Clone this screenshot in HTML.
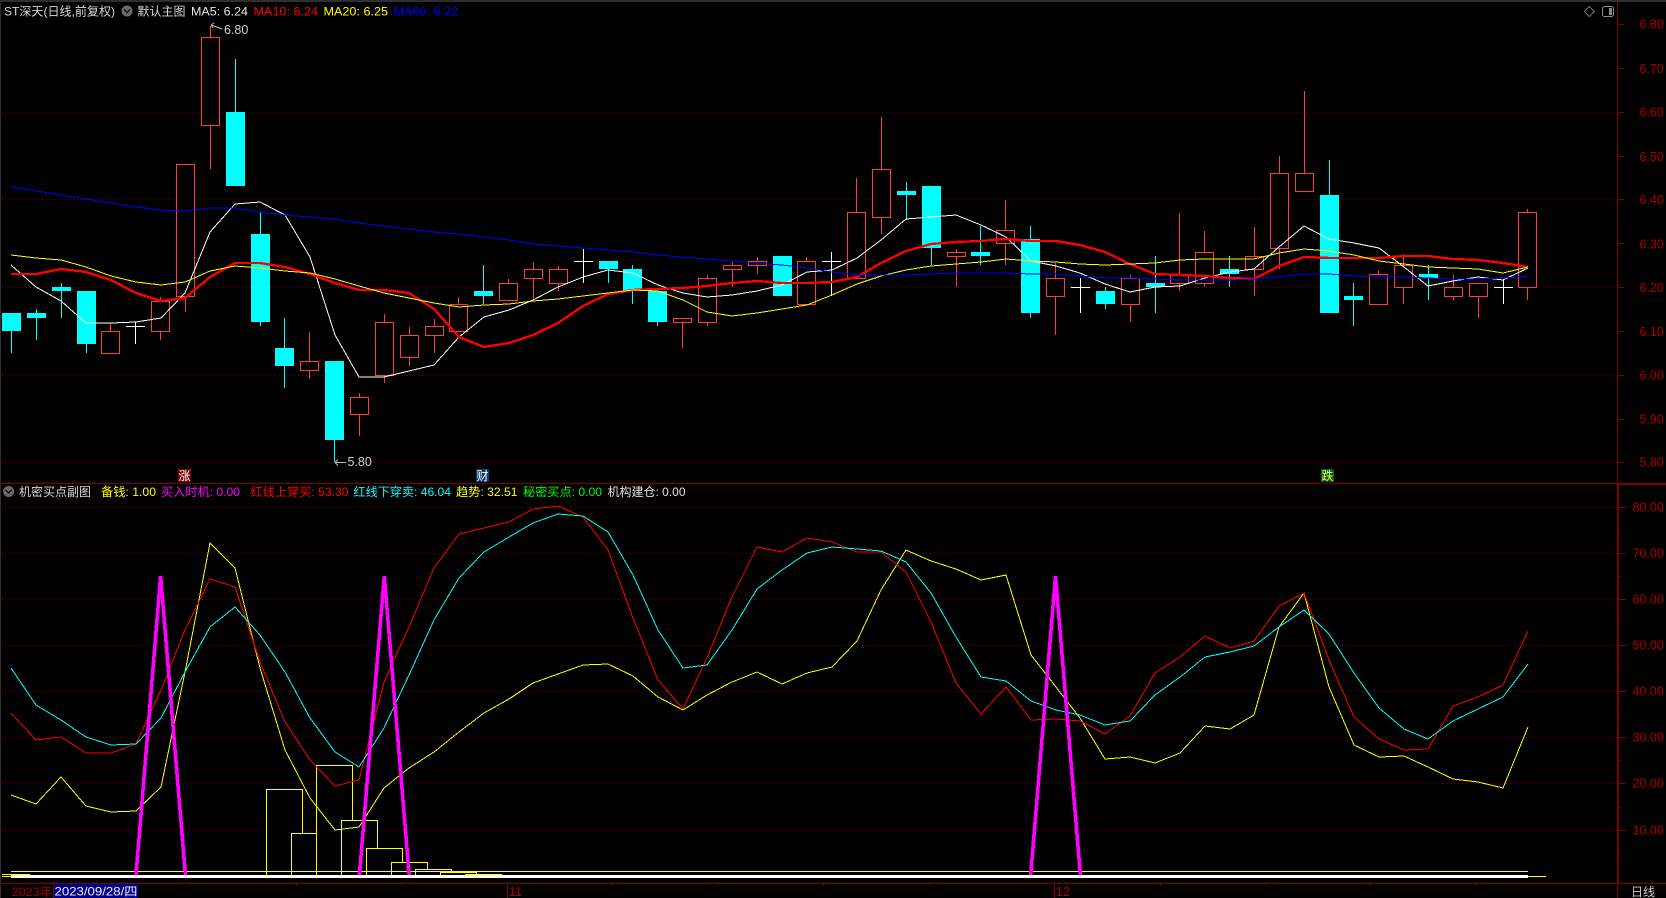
<!DOCTYPE html>
<html lang="zh"><head><meta charset="utf-8"><title>ST深天</title>
<style>
html,body{margin:0;padding:0;background:#000;width:1666px;height:898px;overflow:hidden}
svg{display:block;position:absolute;left:0;top:0}
text{font-family:"Liberation Sans","Noto Sans CJK SC",sans-serif;font-size:12px;white-space:pre}
.ax{font-size:12.5px;fill:#ad0000}
.g{stroke:#800000;stroke-width:1;stroke-dasharray:1 3;fill:none}
.r{fill:#000;stroke:#ff3c3c;stroke-width:1}
.w{stroke:#ff3c3c;stroke-width:1;fill:none}
.cw{stroke:#0ff;stroke-width:1;fill:none}
.c{fill:#0ff}
.l{fill:none;shape-rendering:crispEdges}
</style></head><body>
<svg width="1666" height="898" viewBox="0 0 1666 898" xmlns="http://www.w3.org/2000/svg">
<rect width="1666" height="898" fill="#000"/>
<rect x="0" y="0" width="1666" height="2" fill="#2e2e2e"/>
<rect x="0" y="0" width="1" height="898" fill="#2e2e2e"/>

<!-- grid -->
<path class="g" shape-rendering="crispEdges" d="M2 112.5H1617M2 199.5H1617M2 287.5H1617M2 375.5H1617M2 462.5H1617M2 507.5H1617M2 553.5H1617M2 599.5H1617M2 645.5H1617M2 691.5H1617M2 737.5H1617M2 783.5H1617M2 830.5H1617"/>

<!-- frame -->
<g shape-rendering="crispEdges" fill="#800000">
<rect x="1617" y="2" width="1" height="482"/>
<rect x="1617" y="484" width="2" height="400"/>
<rect x="1617" y="884" width="1" height="14"/>
<rect x="0" y="483" width="1666" height="1"/>
<rect x="1617" y="483" width="49" height="2"/>
<rect x="0" y="883" width="1666" height="1"/>
<path stroke="#800000" d="M1618 24.5h6M1618 68.5h6M1618 112.5h6M1618 156.5h6M1618 199.5h6M1618 243.5h6M1618 287.5h6M1618 331.5h6M1618 375.5h6M1618 419.5h6M1618 462.5h6M1619 507.5h7M1619 553.5h7M1619 599.5h7M1619 645.5h7M1619 691.5h7M1619 737.5h7M1619 783.5h7M1619 830.5h7M1619 530.5h2M1619 576.5h2M1619 622.5h2M1619 668.5h2M1619 714.5h2M1619 760.5h2M1619 807.5h2M1619 853.5h2"/>
<path stroke="#800000" d="M190.5 884v2M296.5 884v2M401.5 884v2M612.5 884v2M718.5 884v2M823.5 884v2M929.5 884v2M1160.5 884v2M1265.5 884v2M1370.5 884v2M1475.5 884v2"/>
<rect x="507" y="884" width="1" height="14"/>
<rect x="1054" y="884" width="1" height="14"/>
<rect x="53" y="884" width="1" height="14"/>
</g>

<!-- candles -->
<g shape-rendering="crispEdges">
<path class="w" d="M110.5 323V331M160.5 297V340M185.5 297V312M210.5 26V169M309.5 332V379M359.5 393V436M384.5 314V383M409.5 327V366M434.5 319V353M458.5 297V332M508.5 279V301M533.5 262V300M558.5 266V291M682.5 318V348M707.5 275V326M732.5 262V287M757.5 257V274M806.5 257V305M856.5 178V279M881.5 117V234M956.5 249V287M1005.5 200V265M1055.5 263V335M1130.5 275V322M1179.5 213V291M1204.5 231V287M1254.5 227V296M1279.5 156V269M1304.5 91V174M1378.5 270V305M1403.5 254V304M1453.5 275V300M1478.5 283V318M1527.5 209V300"/>
<rect class="r" x="101.5" y="331.5" width="18" height="22"/>
<rect class="r" x="151.5" y="301.5" width="18" height="30"/>
<rect class="r" x="176.5" y="164.5" width="18" height="132"/>
<rect class="r" x="201.5" y="37.5" width="18" height="88"/>
<rect class="r" x="300.5" y="361.5" width="18" height="9"/>
<rect class="r" x="350.5" y="397.5" width="18" height="17"/>
<rect class="r" x="375.5" y="322.5" width="18" height="53"/>
<rect class="r" x="400.5" y="335.5" width="18" height="22"/>
<rect class="r" x="425.5" y="326.5" width="18" height="9"/>
<rect class="r" x="449.5" y="304.5" width="18" height="27"/>
<rect class="r" x="499.5" y="283.5" width="18" height="17"/>
<rect class="r" x="524.5" y="269.5" width="18" height="9"/>
<rect class="r" x="549.5" y="269.5" width="18" height="14"/>
<rect class="r" x="673.5" y="318.5" width="18" height="4"/>
<rect class="r" x="698.5" y="278.5" width="18" height="44"/>
<rect class="r" x="723.5" y="265.5" width="18" height="4"/>
<rect class="r" x="748.5" y="261.5" width="18" height="4"/>
<rect class="r" x="797.5" y="261.5" width="18" height="43"/>
<rect class="r" x="847.5" y="212.5" width="18" height="66"/>
<rect class="r" x="872.5" y="169.5" width="18" height="48"/>
<rect class="r" x="947.5" y="252.5" width="18" height="4"/>
<rect class="r" x="996.5" y="230.5" width="18" height="13"/>
<rect class="r" x="1046.5" y="278.5" width="18" height="18"/>
<rect class="r" x="1121.5" y="278.5" width="18" height="26"/>
<rect class="r" x="1170.5" y="274.5" width="18" height="9"/>
<rect class="r" x="1195.5" y="252.5" width="18" height="31"/>
<rect class="r" x="1245.5" y="256.5" width="18" height="13"/>
<rect class="r" x="1270.5" y="173.5" width="18" height="75"/>
<rect class="r" x="1295.5" y="173.5" width="18" height="18"/>
<rect class="r" x="1369.5" y="274.5" width="18" height="30"/>
<rect class="r" x="1394.5" y="265.5" width="18" height="22"/>
<rect class="r" x="1444.5" y="287.5" width="18" height="9"/>
<rect class="r" x="1469.5" y="283.5" width="18" height="13"/>
<rect class="r" x="1518.5" y="212.5" width="18" height="75"/>

<path class="cw" d="M11.5 331V353M36.5 309V340M61.5 283V318M86.5 344V353M235.5 59V112M260.5 212V326M284.5 318V388M334.5 440V462M483.5 265V304M608.5 269V283M632.5 265V304M657.5 322V326M906.5 182V220M931.5 248V265M980.5 226V265M1030.5 226V318M1105.5 287V309M1155.5 256V313M1229.5 256V287M1329.5 160V195M1353.5 283V326M1428.5 265V300"/>
<rect class="c" x="2" y="313" width="19" height="18"/>
<rect class="c" x="27" y="313" width="19" height="5"/>
<rect class="c" x="52" y="287" width="19" height="4"/>
<rect class="c" x="77" y="291" width="19" height="53"/>
<rect class="c" x="226" y="112" width="19" height="74"/>
<rect class="c" x="251" y="234" width="19" height="88"/>
<rect class="c" x="275" y="348" width="19" height="18"/>
<rect class="c" x="325" y="361" width="19" height="79"/>
<rect class="c" x="474" y="291" width="19" height="5"/>
<rect class="c" x="599" y="261" width="19" height="8"/>
<rect class="c" x="623" y="269" width="19" height="22"/>
<rect class="c" x="648" y="291" width="19" height="31"/>
<rect class="c" x="773" y="256" width="19" height="40"/>
<rect class="c" x="897" y="191" width="19" height="4"/>
<rect class="c" x="922" y="186" width="19" height="62"/>
<rect class="c" x="971" y="252" width="19" height="4"/>
<rect class="c" x="1021" y="239" width="19" height="74"/>
<rect class="c" x="1096" y="291" width="19" height="13"/>
<rect class="c" x="1146" y="283" width="19" height="4"/>
<rect class="c" x="1220" y="269" width="19" height="5"/>
<rect class="c" x="1320" y="195" width="19" height="118"/>
<rect class="c" x="1344" y="296" width="19" height="4"/>
<rect class="c" x="1419" y="274" width="19" height="4"/>

<path stroke="#fff" fill="none" d="M135.5 322V344M126 326.5H145M583.5 249V283M574 261.5H593M831.5 252V296M822 261.5H841M1080.5 278V313M1071 287.5H1090M1503.5 279V304M1494 287.5H1513"/>
</g>

<!-- MAs -->
<polyline class="l" stroke="#fff" stroke-width="1" points="11,265 36,287 61,301 86,323 111,323 136,322 161,318 185,293 210,232 235,204 260,202 285,215 310,257 335,335 359,377 384,377 409,371 434,365 459,337 484,317 509,310 533,300 558,287 583,277 608,270 633,273 658,285 683,293 707,297 732,295 757,291 782,285 807,272 832,270 857,258 881,240 906,219 931,217 956,215 981,225 1006,237 1031,261 1056,266 1080,273 1105,284 1130,292 1155,287 1180,286 1205,278 1230,272 1254,269 1279,247 1304,226 1329,239 1354,243 1379,248 1404,267 1428,286 1453,281 1478,277 1503,280 1528,268"/>
<polyline class="l" stroke="#f00" stroke-width="2.4" points="11,274 36,274 61,269 86,272 111,280 136,293 161,301 185,298 210,277 235,263 260,263 285,267 310,274 335,283 359,290 384,290 409,293 434,309 459,337 484,347 509,343 533,335 558,323 583,306 608,294 633,290 658,289 683,288 707,286 732,283 757,281 782,283 807,283 832,282 857,277 881,263 906,251 931,244 956,242 981,241 1006,239 1031,241 1056,241 1080,245 1105,252 1130,264 1155,274 1180,275 1205,276 1230,278 1254,279 1279,266 1304,257 1329,258 1354,258 1379,258 1404,256 1428,256 1453,259 1478,260 1503,263 1528,267"/>
<polyline class="l" stroke="#ff0" stroke-width="1" points="11,255 36,258 61,260 86,267 111,276 136,282 161,285 185,282 210,271 235,266 260,268 285,271 310,273 335,279 359,286 384,293 409,298 434,303 459,307 484,305 509,304 533,301 558,299 583,296 608,293 633,290 658,291 683,300 707,312 732,316 757,313 782,309 807,305 832,295 857,284 881,276 906,270 931,266 956,264 981,262 1006,259 1031,261 1056,262 1080,264 1105,265 1130,264 1155,263 1180,260 1205,259 1230,259 1254,259 1279,253 1304,249 1329,251 1354,255 1379,261 1404,264 1428,267 1453,268 1478,269 1503,273 1528,267"/>
<polyline class="l" stroke="#00f" stroke-width="1" points="11,187 36,191 61,195 86,199 111,203 136,207 161,210 185,211 210,208 235,208 260,212 285,215 310,217 335,219 359,223 384,226 409,229 434,232 459,234 484,237 509,240 533,244 558,246 583,248 608,250 633,252 658,255 683,257 707,259 732,261 757,263 782,265 807,268 832,272 857,275 881,275 906,275 931,274 956,273 981,273 1006,273 1031,274 1056,274 1080,276 1105,278 1130,278 1155,279 1180,280 1205,280 1230,280 1254,279 1279,277 1304,274 1329,274 1354,276 1379,277 1404,277 1428,278 1453,279 1478,279 1503,278 1528,276"/>

<!-- sub: bars -->
<g shape-rendering="crispEdges" fill="#000" stroke="#ff0" stroke-width="1">
<path fill="none" d="M2 874.5H30M2 876.5H30"/>
<rect x="266.5" y="789.5" width="36" height="88"/>
<rect x="291.5" y="833.5" width="36" height="44"/>
<rect x="316.5" y="765.5" width="36" height="112"/>
<rect x="341.5" y="820.5" width="36" height="57"/>
<rect x="366.5" y="848.5" width="36" height="29"/>
<rect x="391.5" y="862.5" width="36" height="15"/>
<rect x="415.5" y="869.5" width="36" height="8"/>
<rect x="440.5" y="872.5" width="36" height="5"/>
<rect x="465.5" y="874.5" width="36" height="3"/>
</g>
<g shape-rendering="crispEdges">
<rect x="11" y="871" width="1517" height="1" fill="#ff0"/>
<rect x="11" y="875" width="1517" height="3" fill="#fff"/>
<rect x="1528" y="876" width="18" height="1" fill="#ff0"/>
</g>

<!-- sub: lines -->
<g class="l" stroke-width="1" fill="none">
<polyline stroke="#ff0" points="11,795 36,804 61,777 86,806 111,812 136,811 161,787 185,672 210,543 235,568 260,668 285,750 310,798 335,830 359,827 384,788 409,768 434,752 459,732 484,713 509,699 533,683 558,674 583,665 608,664 633,676 658,697 683,710 707,695 732,682 757,672 782,684 807,673 832,667 857,641 881,590 906,550 931,561 956,569 981,580 1006,575 1031,655 1056,687 1080,718 1105,759 1130,757 1155,763 1180,753 1205,726 1230,729 1254,715 1279,627 1304,593 1329,687 1354,745 1379,757 1404,756 1428,767 1453,779 1478,782 1503,788 1528,727"/>
<polyline stroke="#f00" points="11,713 36,740 61,737 86,753 111,753 136,744 161,690 185,630 210,579 235,587 260,662 285,722 310,760 335,786 359,780 384,682 409,627 434,568 459,534 484,528 509,522 533,509 558,506 583,517 608,550 633,618 658,680 683,709 707,658 732,597 757,547 782,552 807,538 832,542 857,552 881,552 906,572 931,622 956,683 981,714 1006,687 1031,720 1056,719 1080,721 1105,734 1130,716 1155,673 1180,657 1205,636 1230,648 1254,641 1279,606 1304,593 1329,660 1354,717 1379,739 1404,750 1428,749 1453,706 1478,697 1503,685 1528,631"/>
<polyline stroke="#0ff" points="11,668 36,705 61,720 86,737 111,745 136,744 161,718 185,672 210,627 235,607 260,635 285,672 310,718 335,752 359,767 384,728 409,675 434,620 459,578 484,552 509,537 533,523 558,514 583,516 608,532 633,575 658,630 683,668 707,665 732,630 757,589 782,570 807,553 832,547 857,549 881,551 906,562 931,593 956,637 981,677 1006,681 1031,701 1056,710 1080,715 1105,725 1130,721 1155,695 1180,677 1205,657 1230,652 1254,646 1279,627 1304,610 1329,634 1354,673 1379,708 1404,729 1428,739 1453,721 1478,709 1503,697 1528,664"/>
</g>
<g fill="none" stroke="#f0f" stroke-width="3.6" shape-rendering="crispEdges">
<polyline points="136,875 160.6,576 185.4,875"/>
<polyline points="359.4,875 384.3,576 409.2,875"/>
<polyline points="1030.7,875 1055.5,576 1080.4,875"/>
</g>

<!-- annotations -->
<g fill="none" stroke="#bbb" stroke-width="1">
<path d="M211 25L222 29M211 25l3 -2M211 25l2 3"/>
<path d="M335 462.5H346M335 462.5l3 -3M335 462.5l3 3"/>
</g>
<text x="224" y="34" fill="#d0d0d0" style="font-size:12.5px">6.80</text>
<text x="347.5" y="466" fill="#d0d0d0" style="font-size:12.5px">5.80</text>

<!-- badges -->
<rect x="178" y="469" width="13" height="13" fill="#7a0000"/>
<text x="178.5" y="480" fill="#fff">涨</text>
<rect x="476" y="469" width="13" height="13" fill="#0c3a6a"/>
<text x="476.5" y="480" fill="#fff">财</text>
<rect x="1321" y="469" width="13" height="13" fill="#0a5a0a"/>
<text x="1321.5" y="480" fill="#e8ff70">跌</text>

<!-- title row -->
<text x="4" y="15.5" fill="#d8d8d8" textLength="111" lengthAdjust="spacingAndGlyphs">ST深天(日线,前复权)</text>
<circle cx="127" cy="11" r="5.5" fill="#6a6a6a"/>
<path d="M124 9.5l3 3l3 -3" fill="none" stroke="#111" stroke-width="1.3"/>
<text x="137.5" y="15.5" fill="#d8d8d8">默认主图</text>
<text x="191" y="15.5" fill="#e6e6e6" textLength="57" lengthAdjust="spacingAndGlyphs">MA5: 6.24</text>
<text x="253.5" y="15.5" fill="#f00" textLength="64.5" lengthAdjust="spacingAndGlyphs">MA10: 6.24</text>
<text x="323.5" y="15.5" fill="#ff0" textLength="64.5" lengthAdjust="spacingAndGlyphs">MA20: 6.25</text>
<text x="393.5" y="15.5" fill="#00f" textLength="64.5" lengthAdjust="spacingAndGlyphs">MA60: 6.22</text>

<!-- corner icons -->
<path d="M1589.3 6.5l5 5l-5 5l-5 -5z" fill="none" stroke="#777" stroke-width="1"/>
<rect x="1602.5" y="6.5" width="11" height="10" rx="2" fill="none" stroke="#8a8a8a" stroke-width="1"/>
<rect x="1609" y="8" width="3" height="7" fill="#8a8a8a"/>

<!-- sub title row -->
<circle cx="8.6" cy="491.5" r="5.5" fill="#6a6a6a"/>
<path d="M5.6 490l3 3l3 -3" fill="none" stroke="#111" stroke-width="1.3"/>
<text x="19" y="496" fill="#d8d8d8">机密买点副图</text>
<text x="101" y="496" fill="#ff0" textLength="55" lengthAdjust="spacingAndGlyphs">备钱: 1.00</text>
<text x="161" y="496" fill="#f0f" textLength="79" lengthAdjust="spacingAndGlyphs">买入时机: 0.00</text>
<text x="250.5" y="496" fill="#f00" textLength="98" lengthAdjust="spacingAndGlyphs">红线上穿买: 53.30</text>
<text x="353.5" y="496" fill="#0ff" textLength="97.5" lengthAdjust="spacingAndGlyphs">红线下穿卖: 46.04</text>
<text x="456" y="496" fill="#ff0" textLength="61.5" lengthAdjust="spacingAndGlyphs">趋势: 32.51</text>
<text x="523" y="496" fill="#0f0" textLength="79" lengthAdjust="spacingAndGlyphs">秘密买点: 0.00</text>
<text x="607.5" y="496" fill="#e0e0e0" textLength="78" lengthAdjust="spacingAndGlyphs">机构建仓: 0.00</text>

<!-- price axis -->
<text class="ax" x="1639.5" y="28.5">6.80</text>
<text class="ax" x="1639.5" y="73">6.70</text>
<text class="ax" x="1639.5" y="116.5">6.60</text>
<text class="ax" x="1639.5" y="161">6.50</text>
<text class="ax" x="1639.5" y="204">6.40</text>
<text class="ax" x="1639.5" y="248.5">6.30</text>
<text class="ax" x="1639.5" y="292">6.20</text>
<text class="ax" x="1639.5" y="336">6.10</text>
<text class="ax" x="1639.5" y="379.5">6.00</text>
<text class="ax" x="1639.5" y="423.5">5.90</text>
<text class="ax" x="1639.5" y="466.5">5.80</text>

<text class="ax" x="1632.5" y="511.5">80.00</text>
<text class="ax" x="1632.5" y="557.5">70.00</text>
<text class="ax" x="1632.5" y="603.5">60.00</text>
<text class="ax" x="1632.5" y="649.5">50.00</text>
<text class="ax" x="1632.5" y="695.5">40.00</text>
<text class="ax" x="1632.5" y="741.5">30.00</text>
<text class="ax" x="1632.5" y="787.5">20.00</text>
<text class="ax" x="1632.5" y="834.5">10.00</text>

<!-- bottom axis -->
<text x="12" y="896" fill="#a00000" textLength="40" lengthAdjust="spacingAndGlyphs">2023年</text>
<rect x="54" y="884" width="84" height="14" fill="#000088"/>
<text x="54.5" y="895.5" fill="#f0f0f0" textLength="83" lengthAdjust="spacingAndGlyphs">2023/09/28/四</text>
<text class="ax" x="509" y="896">11</text>
<text class="ax" x="1056" y="896">12</text>
<text x="1631" y="896" fill="#c8c8c8">日线</text>
</svg>
</body></html>
